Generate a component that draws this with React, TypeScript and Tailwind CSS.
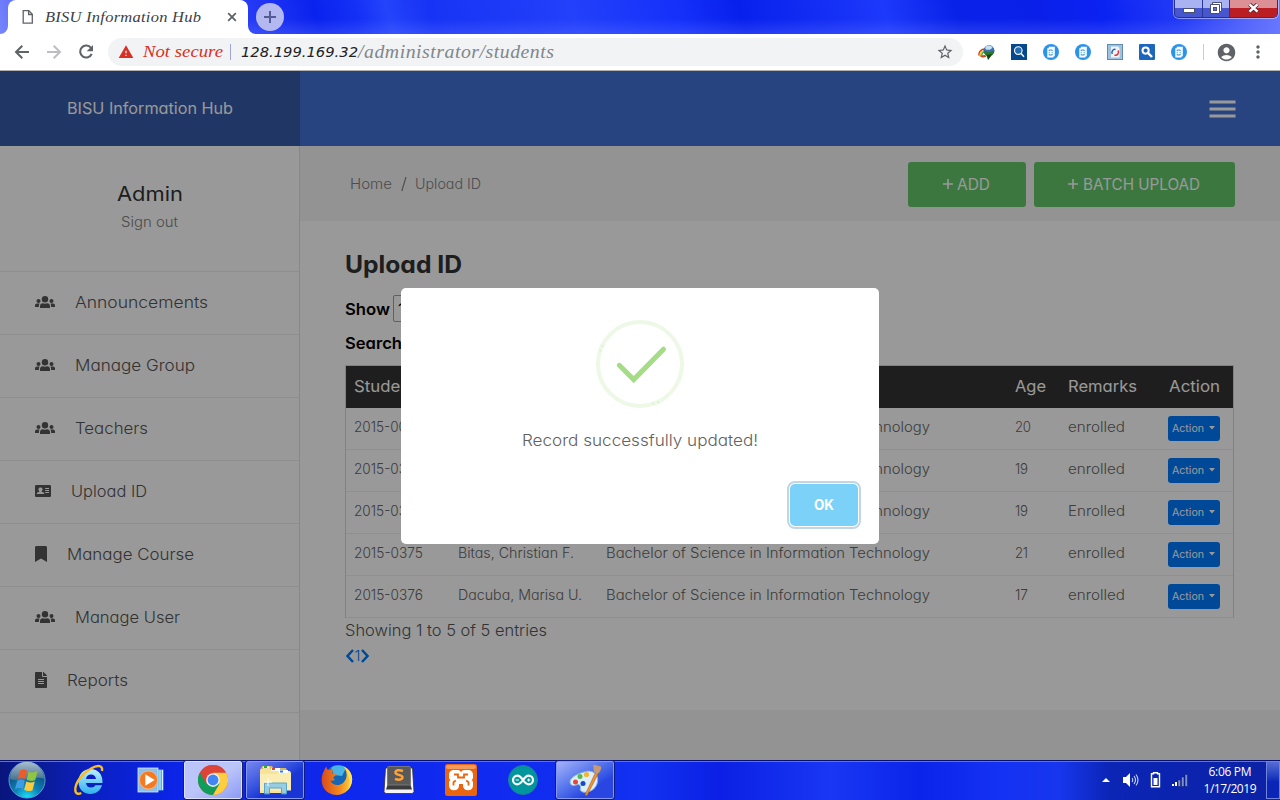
import { useLayoutEffect, useRef } from "react";
import type { ReactNode } from "react";
import { FaBookmark, FaFileAlt } from "react-icons/fa";
import { MdStarBorder, MdAccountCircle, MdMoreVert, MdWarning } from "react-icons/md";

/** A line of text exactly `w` pixels wide: widened glyphs when `stretch` is set, tracking otherwise. */
function Fit({ w, className = "", stretch = true, children }: { w: number; className?: string; stretch?: boolean; children: string }) {
  const ref = useRef<HTMLSpanElement>(null);
  useLayoutEffect(() => {
    const el = ref.current;
    if (!el) return;
    el.style.letterSpacing = "0px";
    el.style.transform = "none";
    const natural = el.getBoundingClientRect().width;
    const scale = stretch ? Math.min(1.1, Math.max(0.94, w / natural)) : 1;
    el.style.letterSpacing = `${(w / scale - natural) / Math.max(1, children.length - 1)}px`;
    el.style.transform = scale === 1 ? "none" : `scaleX(${scale})`;
  }, [w, children, stretch]);
  return (
    <span className={`block whitespace-pre ${className}`} style={{ width: w }}>
      <span ref={ref} className="inline-block origin-left">{children}</span>
    </span>
  );
}

/* ---------- Browser chrome ---------- */

function PageIcon() {
  return (
    <svg width="12" height="16" viewBox="0 0 12 16" fill="none" stroke="#5f6368" strokeWidth="1.3">
      <path d="M1.2 1.7h5.6l3.5 3.6v8.9H1.2z" />
      <path d="M6.6 1.7v3.8h3.7" />
    </svg>
  );
}

function WindowButtons() {
  return (
    <div className="flex h-[18px] w-[104px] overflow-hidden rounded-b-[5px] border border-t-0 border-[#2a2f80] shadow-[0_0_0_1px_rgba(255,255,255,0.45)]">
      <div className="flex w-[28px] items-center justify-center border-r border-[#2a3396] bg-linear-to-b from-[#a9b3f2] from-45% to-[#4656cf] to-50%">
        <svg width="12" height="5" className="mt-[3px]"><rect x=".5" y=".5" width="11" height="4" fill="#fff" stroke="#4a5070" /></svg>
      </div>
      <div className="flex w-[27px] items-center justify-center border-r border-[#2a3396] bg-linear-to-b from-[#a9b3f2] from-45% to-[#4656cf] to-50% pb-[2px]">
        <svg width="12" height="12" viewBox="0 0 12 12">
          <path d="M2.5.5h9v9h-9z" fill="#fff" stroke="#4a5070" />
          <path d="M.5 2.500h9v9h-9z" fill="#fff" stroke="#4a5070" />
          <rect x="3.5" y="5.500" width="3" height="3" fill="#6674d8" stroke="#4a5070" />
        </svg>
      </div>
      <div className="flex flex-1 items-center justify-center bg-linear-to-b from-[#dc8f94] from-45% to-[#ba1d22] to-50% pb-[2px]">
        <svg width="13" height="10" viewBox="0 0 13 10">
          <path d="M2.5 1.3 10.5 8.7M10.5 1.3 2.5 8.7" stroke="#5b2a38" strokeWidth="4.2" />
          <path d="M2.5 1.3 10.5 8.7M10.5 1.3 2.5 8.7" stroke="#fff" strokeWidth="2.5" />
        </svg>
      </div>
    </div>
  );
}

function TabStrip() {
  return (
    <div className="flex h-[34px] justify-between bg-[linear-gradient(to_bottom,transparent_55%,rgba(110,130,255,0.28)),linear-gradient(75deg,#7785fb_0,#6473fa_20px,#2439f5_250px,#0a22ee_310px,#1430f6_350px,#2444fb_380px,#1733f5_420px,#2340fb_560px,#1531fa_660px,#0820ec_720px,#1d39fb_860px,#0922e8_930px,#0a20ea_1010px,#0a22f2_1070px,#2038f6_1140px,#5566fb_1210px,#6b79ff)]">
      <div className="flex pl-2">
        <div className="relative flex w-60 items-center rounded-t-lg bg-white pr-[10px] pl-[14px]">
          <svg className="absolute bottom-0 -left-2" width="8" height="8"><path d="M8 0v8H0A8 8 0 0 0 8 0" fill="#fff" /></svg>
          <svg className="absolute -right-2 bottom-0" width="8" height="8"><path d="M0 0v8h8A8 8 0 0 1 0 0" fill="#fff" /></svg>
          <PageIcon />
          <Fit w={156} className="ml-[11px] font-['Liberation_Serif',serif] text-[15px] leading-5 text-[#3c4043] italic">BISU Information Hub</Fit>
          <svg className="ml-auto" width="12" height="12" viewBox="0 0 12 12"><path d="m2.2 2.2 7.6 7.6m0-7.6L2.2 9.8" stroke="#5f6368" strokeWidth="1.8" /></svg>
        </div>
        <div className="mt-[3px] ml-2 flex size-7 items-center justify-center rounded-full bg-[#b3b9f0]">
          <svg width="14" height="14"><path d="M7 1v12M1 7h12" stroke="#555b94" strokeWidth="2" /></svg>
        </div>
      </div>
      <div className="pr-[2px]"><WindowButtons /></div>
    </div>
  );
}

function RoundExt() {
  return (
    <svg width="16" height="16" viewBox="0 0 16 16">
      <circle cx="8" cy="8" r="8" fill="#2b93ec" />
      <path d="M4.300 4.200h1.500V2.800h6v9.400h-1.200v1.200H4.300z" fill="#fff" />
      <path d="M6.200 7.200V6h3v1.200m0 2.600v1.200h-3V9.800M6.200 8.100v.8M9.200 8.100v.8" fill="none" stroke="#2b93ec" strokeWidth="1" />
    </svg>
  );
}

function SearchExt({ dark = false }: { dark?: boolean }) {
  return (
    <svg width="16" height="16" viewBox="0 0 16 16">
      <rect width="16" height="16" rx={dark ? 0 : 1} fill={dark ? "#05488f" : "#1c66bd"} />
      <circle cx={dark ? 7.3 : 6.6} cy="6.6" r={dark ? 3.8 : 3.1} fill={dark ? "#246bb0" : "none"} stroke="#fff" strokeWidth={dark ? 1.1 : 2} />
      <path d={dark ? "m10 9.500 3 3.200" : "m9 9 4 4"} stroke="#fff" strokeWidth={dark ? 1.5 : 2.4} />
    </svg>
  );
}

function DownloadExt() {
  return (
    <svg width="17" height="16" viewBox="0 0 17 16">
      <path d="M1 11.500C.5 8 3 5 7 5" fill="none" stroke="#d93a20" strokeWidth="1.500" />
      <path d="M2.500 11.500C2 9 4 6.500 7 6.500" fill="none" stroke="#f3cf2c" strokeWidth="1.600" />
      <path d="M3.800 11.500C3.500 9.500 5 8 7 8" fill="none" stroke="#43a838" strokeWidth="1.300" />
      <path d="M1.500 11.500c1.500 2.500 5 2.500 7 1L7 11z" fill="#c3501e" />
      <circle cx="11" cy="6.500" r="5.400" fill="#3f6fae" />
      <path d="M7.500 3c2-2 5-2 7 .5C13 6 10 6.500 7.300 5z" fill="#c4e1f5" />
      <path d="M5.600 6.500 10 8.500l6.400-2c0 2.500-1.400 4-3.200 5L10 15.800V12.500c-2-.5-4-2.500-4.400-6z" fill="#2a7a22" />
      <path d="m8.500 11 6-1-4.500 6z" fill="#12490f" />
    </svg>
  );
}

function SyncExt() {
  return (
    <svg width="16" height="16" viewBox="0 0 16 16">
      <rect x=".5" y=".5" width="15" height="15" fill="#9fc3de" stroke="#5f8cae" />
      <path d="M4 2.500h7l1.500 1.600v9.400H4z" fill="#eef4fa" />
      <path d="M5.300 9.800A3 3 0 0 1 8.500 5.400" fill="none" stroke="#2d5fae" strokeWidth="1.500" />
      <path d="M11 6.500A3 3 0 0 1 7.500 11" fill="none" stroke="#d8343b" strokeWidth="1.500" />
    </svg>
  );
}

function Toolbar() {
  return (
    <div className="flex h-[37px] items-center border-b border-[#b3b1ae] bg-white pl-[14px]">
      <svg width="16" height="16" viewBox="0 0 16 16"><path d="M15 8H2.500M8.300 1.700 2 8l6.300 6.300" fill="none" stroke="#5f6368" strokeWidth="2" /></svg>
      <svg className="ml-4" width="16" height="16" viewBox="0 0 16 16"><path d="M1 8h12.500M7.700 1.700 14 8l-6.300 6.300" fill="none" stroke="#bcbec1" strokeWidth="2" /></svg>
      <svg className="ml-4" width="16" height="16" viewBox="0 0 16 16">
        <path d="M13 4A6 6 0 1 0 13.700 9.800" fill="none" stroke="#5f6368" strokeWidth="2.100" />
        <path d="M15 1v6.300H8.700z" fill="#5f6368" />
      </svg>
      <div className="ml-[14px] flex h-7 w-[855px] items-center rounded-full bg-[#f1f3f4] pr-[9px] pl-[10px]">
        <MdWarning size={16} color="#d93025" />
        <Fit w={80} className="ml-[9px] font-['Liberation_Serif',serif] text-[17px] leading-5 text-[#d93025] italic">Not secure</Fit>
        <div className="ml-[7px] h-4 w-px bg-[#a0a4d4]" />
        <Fit w={117} className="ml-[10px] font-['DejaVu_Sans',sans-serif] text-[14px] leading-5 text-[#202124] italic">128.199.169.32</Fit>
        <Fit w={196} className="font-['Liberation_Serif',serif] text-[18px] leading-5 text-[#80868b] italic">/administrator/students</Fit>
        <MdStarBorder size={18} color="#5f6368" className="ml-auto" />
      </div>
      <div className="ml-[15px] flex items-center gap-4">
        <DownloadExt />
        <SearchExt dark />
        <RoundExt />
        <RoundExt />
        <SyncExt />
        <SearchExt />
        <RoundExt />
      </div>
      <div className="ml-4 h-4 w-px bg-[#ccc]" />
      <MdAccountCircle size={21} color="#5f6368" className="ml-3" />
      <MdMoreVert size={20} color="#5f6368" className="ml-[11px]" />
    </div>
  );
}

/* ---------- Sidebar ---------- */

function UsersIcon() {
  return (
    <svg width="20" height="16" viewBox="0 0 20 16" fill="currentColor">
      <circle cx="10" cy="5.200" r="3.200" />
      <circle cx="3.500" cy="7" r="2" />
      <circle cx="16.500" cy="7" r="2" />
      <path d="M5 14v-1.800C5 10.200 6.200 9.200 7.800 9.200c1.400.6 3 .6 4.400 0 1.600 0 2.800 1 2.800 3V14z" />
      <path d="M0 13v-1.500C0 10.200.8 9.500 2 9.500h2.600c-.5.700-.7 1.500-.7 2.500v1zM20 13v-1.500c0-1.300-.8-2-2-2h-2.600c.5.700.7 1.500.7 2.500v1z" />
    </svg>
  );
}

function AddressCard() {
  return (
    <svg width="16" height="16" viewBox="0 0 16 16">
      <path fillRule="evenodd" fill="currentColor" d="M1.200 2h13.600A1.200 1.200 0 0 1 16 3.200v9.600a1.200 1.200 0 0 1-1.200 1.200H1.200A1.200 1.200 0 0 1 0 12.800V3.200A1.200 1.200 0 0 1 1.200 2ZM5.500 4.500a2 2 0 0 0-1.300 3.600v.8L2.300 9.600c-.5.200-.5.700-.5 1.400h7.400c0-.7 0-1.200-.5-1.400l-1.900-.7v-.8A2 2 0 0 0 5.500 4.500ZM10.200 5v1H14V5Zm0 2v1H14V7Zm0 2v1H14V9Z" />
    </svg>
  );
}

const menu: { label: string; w: number; icon: ReactNode; iconClass: string }[] = [
  { label: "Announcements", w: 133, icon: <UsersIcon />, iconClass: "w-5" },
  { label: "Manage Group", w: 120, icon: <UsersIcon />, iconClass: "w-5" },
  { label: "Teachers", w: 73, icon: <UsersIcon />, iconClass: "w-5" },
  { label: "Upload ID", w: 76, icon: <AddressCard />, iconClass: "w-4" },
  { label: "Manage Course", w: 127, icon: <FaBookmark size={16} />, iconClass: "w-3" },
  { label: "Manage User", w: 105, icon: <UsersIcon />, iconClass: "w-5" },
  { label: "Reports", w: 61, icon: <FaFileAlt size={16} />, iconClass: "w-3" },
];

function Sidebar() {
  return (
    <aside className="flex w-[300px] shrink-0 flex-col border-r border-[#e2e2e2] bg-white">
      <div className="flex h-[126px] flex-col items-center border-b border-[#ededed] pt-[33px]">
        <Fit w={66} className="text-[20px] leading-[30px] text-[#333]">Admin</Fit>
        <Fit w={57} className="mt-[3px] text-[14px] leading-5 font-light text-[#808080]">Sign out</Fit>
      </div>
      {menu.map((m) => (
        <div key={m.label} className="flex h-[63px] items-center border-b border-[#ededed] pb-[2px] pl-[35px] text-[#555]">
          <span className={`flex shrink-0 justify-center ${m.iconClass}`}>{m.icon}</span>
          <Fit w={m.w} className="ml-5 text-[16px] leading-6 font-light">{m.label}</Fit>
        </div>
      ))}
    </aside>
  );
}

/* ---------- Main panel ---------- */

const course = "Bachelor of Science in Information Technology";
const rows = [
  { id: "2015-00", idW: 53, name: "", nameW: 0, age: "20", remark: "enrolled" },
  { id: "2015-03", idW: 53, name: "", nameW: 0, age: "19", remark: "enrolled" },
  { id: "2015-03", idW: 53, name: "", nameW: 0, age: "19", remark: "Enrolled" },
  { id: "2015-0375", idW: 69, name: "Bitas, Christian F.", nameW: 116, age: "21", remark: "enrolled" },
  { id: "2015-0376", idW: 69, name: "Dacuba, Marisa U.", nameW: 124, age: "17", remark: "enrolled" },
];
const grid = "grid grid-cols-[104px_148px_409px_53px_101px_1fr] items-center pl-2";

function StudentTable() {
  return (
    <div className="mt-2 w-[889px] border border-[#d8d8d8] border-b-0">
      <div className={`${grid} h-[42px] bg-[#333] pb-[2px] text-[16px] leading-6 text-white`}>
        <Fit w={83}>Student ID</Fit>
        <span />
        <span />
        <Fit w={31}>Age</Fit>
        <Fit w={69}>Remarks</Fit>
        <Fit w={51}>Action</Fit>
      </div>
      {rows.map((r, i) => (
        <div key={i} className={`${grid} h-[42px] border-b border-[#eeeeee] text-[14px] leading-5 font-light text-[#666]`}>
          <div className="pb-[3px]"><Fit w={r.idW}>{r.id}</Fit></div>
          <div className="pb-[3px]">{r.name && <Fit w={r.nameW}>{r.name}</Fit>}</div>
          <div className="pb-[3px]"><Fit w={324}>{course}</Fit></div>
          <div className="pb-[3px]"><Fit w={r.age === "20" ? 16 : 13}>{r.age}</Fit></div>
          <div className="pb-[3px]"><Fit w={57}>{r.remark}</Fit></div>
          <div className="-ml-px flex h-[25px] w-[52px] items-center rounded-[3px] bg-[#007bff] pl-[4px] text-white">
            <Fit w={32} className="text-[10.5px] leading-4 font-normal">Action</Fit>
            <svg className="mb-px ml-[5px]" width="6" height="4"><path d="M0 0h6L3 3.500z" fill="#fff" /></svg>
          </div>
        </div>
      ))}
    </div>
  );
}

function PlusIcon() {
  return <svg width="10" height="10"><path d="M5 0v10M0 5h10" stroke="#fff" strokeWidth="1.600" /></svg>;
}

function MainPanel() {
  return (
    <main className="flex flex-1 flex-col bg-[#f5f5f5]">
      <div className="flex h-[75px] items-center justify-between pr-[45px] pl-[50px]">
        <div className="flex items-center text-[14px] leading-5 font-light text-[#808080]">
          <Fit w={42}>Home</Fit>
          <svg className="ml-[9px]" width="6" height="16"><path d="M.8 15 5 1" stroke="currentColor" strokeWidth="1.100" /></svg>
          <Fit w={66} className="ml-[8px]">Upload ID</Fit>
        </div>
        <div className="flex gap-2 pt-px text-[16px] leading-6 text-white">
          <div className="flex h-[45px] w-[118px] items-center gap-1 rounded-[3px] bg-[#63c76a] pl-[35px]">
            <PlusIcon /><Fit w={33}>ADD</Fit>
          </div>
          <div className="flex h-[45px] w-[201px] items-center gap-[5px] rounded-[3px] bg-[#63c76a] pl-[34px]">
            <PlusIcon /><Fit w={117}>BATCH UPLOAD</Fit>
          </div>
        </div>
      </div>
      <section className="flex h-[489px] flex-col items-start bg-white pt-[26px] pl-[45px]">
        <Fit w={117} className="text-[24px] leading-9 font-bold text-[#333]">Upload ID</Fit>
        <div className="mt-[11px] flex h-[29px] items-center text-[16px] font-semibold text-black">
          <Fit w={45}>Show</Fit>
          <span className="ml-[3px] flex h-[27px] w-12 items-center rounded-[2px] border border-[#a0a0a0] pl-[4px] font-normal">10</span>
        </div>
        <div className="mt-[8px] flex h-[26px] items-center pb-[2px] text-[16px] font-semibold text-black">
          <Fit w={57}>Search</Fit>
        </div>
        <StudentTable />
        <Fit w={202} className="text-[16px] leading-6 font-light text-[#555]">Showing 1 to 5 of 5 entries</Fit>
        <div className="flex h-[26px] items-center pt-px pl-px text-[#007bff]">
          <svg width="8" height="14" viewBox="0 0 8 14"><path d="M7 1 1.500 7 7 13" fill="none" stroke="currentColor" strokeWidth="2.500" /></svg>
          <span className="w-[7px] text-center text-[15px] leading-6 font-light">1</span>
          <svg width="8" height="14" viewBox="0 0 8 14"><path d="m1 1 5.500 6L1 13" fill="none" stroke="currentColor" strokeWidth="2.500" /></svg>
        </div>
      </section>
    </main>
  );
}

function Modal() {
  return (
    <div className="flex h-64 w-[478px] flex-col items-center rounded-[5px] bg-white pt-8">
      <svg width="88" height="88" viewBox="0 0 88 88" fill="none">
        <circle cx="44" cy="44" r="42" stroke="#edf8e7" strokeWidth="4" />
        <path d="m23.300 45.300 14.400 14.300 29.800-30.400" stroke="#a5dc86" strokeWidth="5" strokeLinecap="round" />
        <path d="m5 24.500 2.500 2.500M3.500 29.500l2 2M56 82.500l2.500 2.500M61 81l2.500 2.500" stroke="#c3e8ae" strokeWidth=".6" />
      </svg>
      <Fit w={236} className="mt-5 text-[16px] leading-6 font-light text-[#616161]">Record successfully updated!</Fit>
      <div className="mt-8 mr-[21px] flex h-[42px] w-[68px] items-center justify-center self-end rounded-[5px] bg-[#7cd1f9] shadow-[0_0_0_1px_#fff,0_0_0_3px_rgba(43,114,165,0.29)]">
        <Fit w={20} className="text-[14px] leading-5 font-bold text-white">OK</Fit>
      </div>
    </div>
  );
}

function WebPage() {
  return (
    <div className="relative flex h-[689px] flex-col font-['Inter','Open_Sans',sans-serif] [font-feature-settings:'cv11'_1]">
      <header className="flex h-[75px] shrink-0 bg-[#4272d7]">
        <div className="flex w-[300px] items-center justify-center bg-[#365ba8] pb-px">
          <Fit w={166} className="text-[16px] leading-6 text-white">BISU Information Hub</Fit>
        </div>
        <div className="flex flex-1 items-center justify-end pr-11">
          <svg width="27" height="18"><path d="M.5 2h26M.5 9h26M.5 16h26" stroke="#fff" strokeWidth="3" /></svg>
        </div>
      </header>
      <div className="flex min-h-0 flex-1">
        <Sidebar />
        <MainPanel />
      </div>
      <div className="absolute inset-0 flex items-center justify-center bg-black/40"><Modal /></div>
    </div>
  );
}

/* ---------- Taskbar ---------- */

function StartOrb() {
  return (
    <svg width="38" height="38" viewBox="0 0 38 38">
      <defs>
        <radialGradient id="orb" cx=".5" cy="1" r=".9"><stop offset="0" stopColor="#20e2fb" /><stop offset=".4" stopColor="#0c84b8" /><stop offset="1" stopColor="#0c3c6b" /></radialGradient>
        <linearGradient id="orbTop" x2="0" y2="1"><stop offset="0" stopColor="#c4d5df" /><stop offset="1" stopColor="#4c7390" /></linearGradient>
      </defs>
      <circle cx="19" cy="19" r="18" fill="url(#orb)" stroke="#5e9ccc" />
      <path d="M2 18a17 17 0 0 1 34 0c-8-4-25 4-34 0" fill="url(#orbTop)" opacity=".85" />
      <path d="M12 9.500q4-2 7 .2L17.300 18q-4-2-7.500 0z" fill="#ee5a28" />
      <path d="M20.700 10.500q4 2 9-.5l-2.500 9q-4 2-8.500-.2z" fill="#8ec63f" />
      <path d="M9.300 19.500q4-2 7.500 0L15 28q-3.500-2-8 .2z" fill="#3e9ce4" />
      <path d="M18.300 20.500q4 2 8.500 0l-2.300 8.700q-4 2-8.400-.4z" fill="#fbcb3c" />
    </svg>
  );
}

function IeIcon() {
  return (
    <svg width="32" height="32" viewBox="0 0 32 32">
      <defs><linearGradient id="ie" x2="0" y2="1"><stop offset="0" stopColor="#bdf0ff" /><stop offset="1" stopColor="#2fb0ee" /></linearGradient></defs>
      <path fillRule="evenodd" d="M17.500 5C25 5 30 10.500 29.500 19H13c.4 3 2.200 4.500 5 4.500 2.200 0 3.500-.8 4.300-2.200h6.800C27.300 26.500 23.500 30 17.500 30 10 30 5.500 25 5.500 17.500S10.500 5 17.500 5ZM13 15h10c-.4-3-2.200-4.600-5-4.600s-4.600 1.600-5 4.600Z" fill="url(#ie)" />
      <path d="M29 7C30 1.500 25 .5 18 4.500 9 9.500 2 19 2.300 26c.2 4 3 4.500 6 3" fill="none" stroke="#f7bd24" strokeWidth="2.400" />
    </svg>
  );
}

function WmpIcon() {
  return (
    <svg width="28" height="28" viewBox="0 0 28 28">
      <path d="M20 3.500h6.500v21H20z" fill="#4fb2e6" />
      <path d="M23 4v20M25.500 4v20" stroke="#d9f1fc" />
      <rect x="1" y="2" width="20" height="24" fill="#8fbfe6" stroke="#d3e7f7" strokeWidth=".8" />
      <circle cx="11.500" cy="14" r="9" fill="#f47920" stroke="#ffb36c" />
      <path d="m8.300 8.300 9.400 5.700-9.400 5.700z" fill="#fff" />
    </svg>
  );
}

function ChromeIcon() {
  return (
    <svg width="30" height="30" viewBox="0 0 48 48">
      <circle cx="24" cy="24" r="24" fill="#db4437" />
      <path d="M3.200 12A24 24 0 0 0 24 48l10.400-18H13.600z" fill="#0f9d58" />
      <path d="M44.800 12H24l10.400 18L24 48A24 24 0 0 0 44.800 12" fill="#ffcd40" />
      <path d="M3.200 12A24 24 0 0 1 44.800 12H24L13.600 30z" fill="#db4437" />
      <circle cx="24" cy="24" r="11" fill="#f1f1f1" />
      <circle cx="24" cy="24" r="8.700" fill="#4285f4" />
    </svg>
  );
}

function ExplorerIcon() {
  return (
    <svg width="34" height="32" viewBox="0 0 34 32">
      <path d="M3 4l1.500-2H14l1 2h13l1 3v20H2V6z" fill="#d9b75c" />
      <path d="M5 2.500h6l1 2h-7z" fill="#fff" /><rect x="6" y="2" width="3" height="2" fill="#28b428" />
      <path d="M2 8V6l1.500-1H12l2 2h15v22H2z" fill="#f7e398" />
      <rect x="13" y="4" width="9" height="3" fill="#fff" /><rect x="14" y="4" width="3" height="2" fill="#d8472a" />
      <path d="M2 10h17l2-3h11l1 2v17.500H2z" fill="#fbedb1" />
      <rect x="21" y="6" width="9" height="3" fill="#fff" /><rect x="22" y="6.500" width="3" height="2" fill="#2585e6" />
      <path d="M6.500 30V19h22v11h-5v-6h-12v6z" fill="#8bcaea" stroke="#4a9fc9" opacity=".9" />
      <path d="M10 14v8M6 18h8" stroke="#fff" />
    </svg>
  );
}

function FirefoxIcon() {
  return (
    <svg width="32" height="32" viewBox="0 0 32 32">
      <defs><linearGradient id="ff" x1="0" x2="1"><stop offset="0" stopColor="#d94a1c" /><stop offset=".6" stopColor="#f38a1e" /><stop offset="1" stopColor="#fcd941" /></linearGradient></defs>
      <circle cx="17" cy="14.500" r="13.500" fill="#1467b4" />
      <path d="M10 4c4-4 12-3 15 0l-4 8-8-1z" fill="#49b4e6" />
      <path d="M3 7c.5-2 1.500-3.500 2.500-4.500 0 2 .8 3 1.800 3.500C9 5 11 5 12.500 5.500 11 7 11 8 11.500 9.500h4c.7 1.500-1.500 2.500-3 3.500-.5 1.500.5 2 1.500 2.700-2 1.300-3 1.300-4.500.8 1.500 5 9 6.500 13.500 1.500 4-4.500 3-11-.5-15.500C33 7 33.500 19.500 26.500 26.500S7 32 2.500 23.500C-.5 17.500.5 11 3 7Z" fill="url(#ff)" />
      <path d="M22.500 2.500C33 7 33.500 19.500 26.500 26.500c3-7 2-9 1.500-12C27 8 25 5 22.500 2.500" fill="#ffe04e" />
    </svg>
  );
}

function SublimeIcon() {
  return (
    <svg width="32" height="30" viewBox="0 0 32 30">
      <path d="M2.500 3h27L31 26.500 29.500 28.500h-27L1 26.500z" fill="#f5f5f5" stroke="#303030" strokeWidth=".8" />
      <path d="M4.500 2h23v18l1.500 4.500H3L4.500 20z" fill="#3b3b3b" />
      <rect x="4.500" y="1.500" width="23" height="18.500" rx="1" fill="#595959" stroke="#777" />
      <path d="M20 6c-4-1.500-7.500-.8-7.500 1.500 0 3 7 1.800 7 4.800 0 2.500-4 3-7.500 1.500" fill="none" stroke="#ffa13a" strokeWidth="2.500" />
    </svg>
  );
}

function XamppIcon() {
  return (
    <svg width="32" height="32" viewBox="0 0 32 32">
      <rect width="32" height="32" rx="2.500" fill="#e9650f" />
      <rect x="1" y="1" width="30" height="4" rx="2" fill="#f39a5c" />
      <path d="M9 6h3.500c2 0 3.500 1 3.500 3 0-2 1.500-3 3.500-3H23c3 0 5 2 5 4.800V13c0 1.500-.5 2.500-1.500 3 1 .5 1.500 1.500 1.500 3v2.500c0 3-2 4.800-5 4.800s-5-1.800-5-4.800V20h-4v1.500c0 3-2 4.800-5 4.800s-5-1.800-5-4.800V19c0-1.500.5-2.500 1.500-3C4.500 15.500 4 14.500 4 13v-2.200C4 8 6 6 9 6Z" fill="#fff" />
      <path d="M9 10.500h4v3h6v-3h4M8.500 21.500v-3.300l2.300-1.700M23.500 21.500v-3.300l-2.300-1.700" fill="none" stroke="#e9650f" strokeWidth="1.800" />
    </svg>
  );
}

function ArduinoIcon() {
  return (
    <svg width="30" height="30" viewBox="0 0 30 30">
      <circle cx="15" cy="15" r="14.500" fill="#00979c" stroke="#227c9f" />
      <path d="M15 15c-2-3-3.700-4.300-5.700-4.300a4.300 4.300 0 0 0 0 8.600c2 0 3.700-1.300 5.700-4.300s3.700-4.300 5.700-4.300a4.300 4.300 0 0 1 0 8.600c-2 0-3.700-1.300-5.700-4.300Z" fill="none" stroke="#fff" strokeWidth="2.200" />
      <path d="M7.700 15h3.200M19.100 15h3.200m-1.600-1.600v3.200" stroke="#fff" strokeWidth="1.100" />
    </svg>
  );
}

function PaintIcon() {
  return (
    <svg width="34" height="32" viewBox="0 0 34 32">
      <path d="M16 8C24 5 31 10 29.500 18 28 27 17 30.500 13 27c-2-2 1-4-1.500-6S6 24 2.500 20C0 15 7 10.500 16 8Z" fill="#dceefa" stroke="#80b8df" />
      <circle cx="7.500" cy="18" r="2.500" fill="#e2493c" /><circle cx="12" cy="12.500" r="2.500" fill="#58b947" /><circle cx="18.500" cy="10.500" r="2.600" fill="#f4b62d" /><circle cx="15" cy="19.500" r="2.500" fill="#1847c8" />
      <path d="M27.500 8.500 17 31l2 .5L30 10z" fill="#ef9135" stroke="#b45e18" strokeWidth=".6" />
      <path d="M26 8c-.5-3-1-5-.5-7.500L33 2.500c.5 2-.5 5.500-3.500 7.500z" fill="#c69a72" />
    </svg>
  );
}

const apps: { icon: ReactNode; cell: string }[] = [
  { icon: <IeIcon />, cell: "border-transparent" },
  { icon: <WmpIcon />, cell: "border-transparent" },
  { icon: <ChromeIcon />, cell: "border-[#dce1ff] bg-linear-to-br from-[#bcc5fa] from-50% to-[#8d9bf4] outline outline-[#172070]" },
  { icon: <ExplorerIcon />, cell: "border-[#8998ef] bg-linear-to-br from-[#7785ef] to-[#1935d6] to-60% outline outline-[#101a80]" },
  { icon: <FirefoxIcon />, cell: "border-transparent" },
  { icon: <SublimeIcon />, cell: "border-transparent" },
  { icon: <XamppIcon />, cell: "border-transparent" },
  { icon: <ArduinoIcon />, cell: "border-transparent" },
  { icon: <PaintIcon />, cell: "border-[#8998ef] bg-linear-to-br from-[#a5b1f8] to-[#2945e2] to-70% outline outline-[#101a80]" },
];

function Taskbar() {
  return (
    <footer className="flex h-10 items-center border-t border-[#07106c] bg-[linear-gradient(90deg,#08157d_0,#0b1c9f_50px,#0a20c7_100px,#0b24e5_170px,#1029ef_420px,#1130f0_650px,#0b20e4_720px,#1937f4_830px,#0b24e9_920px,#1432f4_1000px,#1736ed_1060px,#0b25b5_1110px,#0b22a5_1280px)] pb-px shadow-[inset_0_1px_0_#5e70f0]">
      <div className="ml-2 w-[52px]"><StartOrb /></div>
      <div className="flex gap-1">
        {apps.map((a, i) => (
          <div key={i} className={`flex h-[38px] w-[58px] items-center justify-center rounded-[2px] border ${a.cell}`}>{a.icon}</div>
        ))}
      </div>
      <div className="ml-auto flex h-full items-center">
        <svg width="8" height="4"><path d="M0 4h8L4 0z" fill="#fff" /></svg>
        <svg className="ml-[13px]" width="16" height="16" viewBox="0 0 16 16">
          <path d="M0 5h3l4-4v14l-4-4H0z" fill="#fff" />
          <path d="M9 6q1.500 2 0 4M11 4q3 4 0 8M13 2.500q4 5.500 0 11" fill="none" stroke="#c9d2ff" strokeWidth="1.100" />
        </svg>
        <svg className="ml-[11px]" width="11" height="16" viewBox="0 0 11 16">
          <path d="M3.500 1.800V.7h4v1.100h2v13h-8v-13z" fill="none" stroke="#fff" strokeWidth="1.400" /><path d="M3.500 6h4v7h-4z" fill="#fff" />
        </svg>
        <svg className="ml-[10px]" width="17" height="13" viewBox="0 0 17 13">
          <path d="M1 10h2v2H1zM4 8h2v4H4z" fill="#fff" />
          <path d="M7 6h2.500v6.500H7zM10.500 3H13v9.500h-2.500zM14 .5h2.500v12H14z" fill="#7e8fd0" stroke="#0a1864" strokeWidth=".5" />
        </svg>
        <div className="ml-[15px] flex w-[54px] flex-col items-center font-['Open_Sans','Noto_Sans',sans-serif] text-[12px] leading-[17px] text-white">
          <Fit w={43} stretch={false}>6:06 PM</Fit>
          <Fit w={53} stretch={false}>1/17/2019</Fit>
        </div>
        <div className="ml-[9px] h-[38px] w-[14px] border border-[#7183dc] bg-linear-to-b from-[#576cd2] to-[#0b25b7] to-55%" />
      </div>
    </footer>
  );
}

export default function App() {
  return (
    <div className="h-[800px] w-[1280px] overflow-hidden bg-white">
      <TabStrip />
      <Toolbar />
      <WebPage />
      <Taskbar />
    </div>
  );
}
